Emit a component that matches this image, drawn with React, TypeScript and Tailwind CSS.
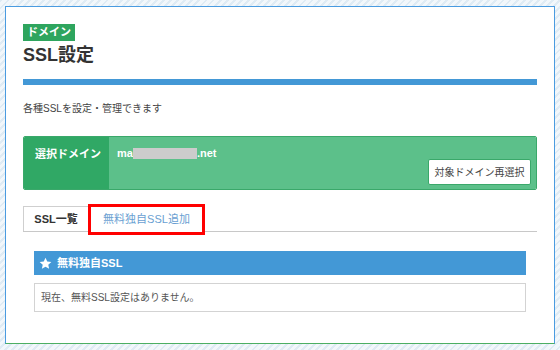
const jp = "font-['Liberation_Sans','Noto_Sans_CJK_JP',sans-serif]";

function StarIcon() {
  return (
    <svg width="13" height="13" viewBox="0 0 24 24" fill="#fff">
      <path d="M12 1.5l3.2 7 7.6.8-5.7 5.1 1.6 7.5L12 18.1l-6.7 3.8 1.6-7.5L1.2 9.3l7.6-.8z" />
    </svg>
  );
}

export default function App() {
  return (
    <div
      className={`${jp} w-[560px] h-[350px] pt-[6px] pl-[5px] pr-[5px] bg-[repeating-linear-gradient(135deg,#dfebf4_0px,#dfebf4_2px,#f2f7fb_2px,#f2f7fb_5px)]`}
    >
      <div className="h-[338px] bg-white border-t border-l border-r border-[#4a9be0] border-b border-b-[#4caf63] px-[17px] pt-[17px]">
        <div className="w-fit bg-[#2ea55e] text-white text-[11px] font-bold leading-[17px] px-[4px]">
          ドメイン
        </div>
        <h1 className="text-[18px] font-bold text-[#333] leading-[22px] mt-[3px]">SSL設定</h1>
        <div className="h-[6px] bg-[#4398d6] mt-[13px]" />
        <p className="text-[10px] text-[#444] leading-[14px] mt-[17px]">各種SSLを設定・管理できます</p>

        <div className="mt-[20px] h-[54px] flex rounded-[2px] overflow-hidden border border-[#3aa86a]">
          <div className="w-[85px] bg-[#30a865] text-white text-[11px] font-bold pt-[10px] pl-[11px] leading-[14px]">
            選択ドメイン
          </div>
          <div className="flex-1 bg-[#5cc08a] flex justify-between pl-[8px] pr-[5px] pt-[9px] pb-[4px]">
            <div className="flex items-center h-[14px] text-white text-[11px] font-bold">
              ma
              <span className="inline-block w-[64px] h-[11px] bg-[#cccccc]" />
              .net
            </div>
            <button className="self-end h-[26px] w-[103px] px-0 bg-white border border-[#3aa86a] rounded-[2px] text-[10px] text-[#444]">
              対象ドメイン再選択
            </button>
          </div>
        </div>

        <div className="mt-[16px] flex items-start border-b border-[#c8c8c8]">
          <div className="w-[65px] h-[25px] border-l border-t border-[#cfcfcf] flex items-center justify-center text-[11px] font-bold text-[#333]">
            SSL一覧
          </div>
          <div className="relative w-[117px] h-[31px] mt-[-2px] mb-[-4px] border-[3px] border-[#ff0000] bg-white flex items-center justify-center text-[11px] text-[#6a9fd2]">
            無料独自SSL追加
          </div>
        </div>

        <div className="mx-[11px] mt-[19px]">
          <div className="h-[24px] bg-[#4398d6] flex items-center pl-[5px] gap-[5px] text-white text-[11px] font-bold">
            <StarIcon />
            無料独自SSL
          </div>
          <div className="mt-[8px] h-[29px] border border-[#d3d3d3] flex items-center pl-[6px] text-[10px] text-[#555]">
            現在、無料SSL設定はありません。
          </div>
        </div>
      </div>
    </div>
  );
}
